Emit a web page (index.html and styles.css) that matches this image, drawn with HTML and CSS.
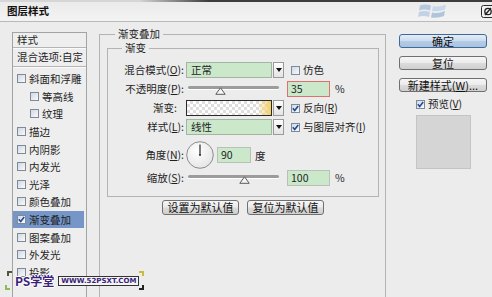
FILE: index.html
```html
<!DOCTYPE html>
<html lang="zh-CN">
<head>
<meta charset="utf-8">
<title>图层样式</title>
<link rel="stylesheet" href="styles.css">
</head>
<body>
<div class="win">
  <div class="titlebar">
    <span class="title">图层样式</span>
    <svg class="winlogo" viewBox="0 0 30 17" width="30" height="17">
      <path d="M2 3.5 Q7 1.5 13 3.5 L12 8.5 Q6.5 6.5 1 8.5 Z" fill="#b4c8de"/>
      <path d="M15 4 Q21 5.5 28 2.5 L27 7.5 Q21 10 14 9 Z" fill="#c9d8e9"/>
      <path d="M1 10 Q6 8 12 10 L11 15 Q5.5 13 0 15 Z" fill="#c2d3e6"/>
      <path d="M14 10.5 Q20 12 27 9 L26 14 Q20 16.5 13 15.5 Z" fill="#b0c4dc"/>
    </svg>
    <span class="close">
      <svg viewBox="0 0 16 13" width="16" height="13">
        <rect x="0.5" y="0.5" width="15" height="12" rx="2" fill="#f2f2f2" stroke="#2c2c2c"/>
        <circle cx="7" cy="6.5" r="3.2" fill="none" stroke="#222" stroke-width="1.3"/>
        <path d="M4 10 L10 3" stroke="#222" stroke-width="1.3"/>
      </svg>
    </span>
  </div>

  <div class="main">
    <div class="side">
      <div class="list">
        <div class="lh lh1">样式</div>
        <div class="lh lh2">混合选项:自定</div>
        <div class="items">
          <div class="it"><span class="cb"></span>斜面和浮雕</div>
          <div class="it sub"><span class="cb"></span>等高线</div>
          <div class="it sub"><span class="cb"></span>纹理</div>
          <div class="it"><span class="cb"></span>描边</div>
          <div class="it"><span class="cb"></span>内阴影</div>
          <div class="it"><span class="cb"></span>内发光</div>
          <div class="it"><span class="cb"></span>光泽</div>
          <div class="it"><span class="cb"></span>颜色叠加</div>
          <div class="it sel"><span class="cb on"><svg viewBox="0 0 9 9" width="9" height="9"><path d="M1.8 4.3 L3.7 6.5 L7.2 1.9" stroke="#1f4a9c" stroke-width="1.6" fill="none"/></svg></span>渐变叠加</div>
          <div class="it"><span class="cb"></span>图案叠加</div>
          <div class="it"><span class="cb"></span>外发光</div>
          <div class="it"><span class="cb"></span>投影</div>
        </div>
      </div>
    </div>

    <div class="center">
      <fieldset class="outer">
        <legend>渐变叠加</legend>
        <fieldset class="inner">
          <legend>渐变</legend>
          <div class="rows">
            <div class="row">
              <span class="lbl">混合模式(<u>O</u>):</span>
              <div class="dd"><span class="val">正常</span><span class="arrow"></span></div>
              <div class="third"><span class="chk"><span class="cb"></span><span class="ct">仿色</span></span></div>
            </div>
            <div class="row">
              <span class="lbl">不透明度(<u>P</u>):</span>
              <div class="slider"><span class="track"></span><svg class="thumb" style="left:35%" viewBox="0 0 11 8" width="11" height="8"><path d="M5.5 0.8 L10.2 7.3 L0.8 7.3 Z" fill="#f6f6f6" stroke="#5a5a5a"/></svg></div>
              <div class="third"><span class="num err">35</span><span class="pct">%</span></div>
            </div>
            <div class="row">
              <span class="lbl gl">渐变:</span>
              <div class="grad"><span class="gbox"></span><span class="arrow"></span></div>
              <div class="third"><span class="chk"><span class="cb on"><svg viewBox="0 0 9 9" width="9" height="9"><path d="M1.8 4.3 L3.7 6.5 L7.2 1.9" stroke="#1f4a9c" stroke-width="1.6" fill="none"/></svg></span><span class="ct">反向(<u>R</u>)</span></span></div>
            </div>
            <div class="row r4">
              <span class="lbl">样式(<u>L</u>):</span>
              <div class="dd"><span class="val">线性</span><span class="arrow"></span></div>
              <div class="third"><span class="chk"><span class="cb on"><svg viewBox="0 0 9 9" width="9" height="9"><path d="M1.8 4.3 L3.7 6.5 L7.2 1.9" stroke="#1f4a9c" stroke-width="1.6" fill="none"/></svg></span><span class="ct">与图层对齐(<u>I</u>)</span></span></div>
            </div>
            <div class="row dialrow">
              <span class="lbl">角度(<u>N</u>):</span>
              <div class="dialwrap">
                <svg class="dial" viewBox="0 0 28 28" width="28" height="28">
                  <defs><radialGradient id="dg" cx="40%" cy="35%" r="70%"><stop offset="0" stop-color="#ffffff"/><stop offset="1" stop-color="#e4e4e4"/></radialGradient></defs>
                  <circle cx="14" cy="14" r="13.3" fill="url(#dg)" stroke="#8c8c8c"/>
                  <path d="M14 14 L14 3.5" stroke="#2a2a2a" stroke-width="1.2"/>
                  <circle cx="14" cy="14" r="1" fill="#2a2a2a"/>
                </svg>
                <span class="num ang">90</span>
                <span class="deg">度</span>
              </div>
              <div class="third"></div>
            </div>
            <div class="row r6">
              <span class="lbl">缩放(<u>S</u>):</span>
              <div class="slider"><span class="track"></span><svg class="thumb" style="left:62%" viewBox="0 0 11 8" width="11" height="8"><path d="M5.5 0.8 L10.2 7.3 L0.8 7.3 Z" fill="#f6f6f6" stroke="#5a5a5a"/></svg></div>
              <div class="third"><span class="num">100</span><span class="pct">%</span></div>
            </div>
          </div>
        </fieldset>
        <div class="defbtns">
          <button class="btn">设置为默认值</button>
          <button class="btn">复位为默认值</button>
        </div>
      </fieldset>
    </div>

    <div class="right">
      <button class="btn def">确定</button>
      <button class="btn">复位</button>
      <button class="btn">新建样式(<u>W</u>)...</button>
      <span class="chk pv"><span class="cb on"><svg viewBox="0 0 9 9" width="9" height="9"><path d="M1.8 4.3 L3.7 6.5 L7.2 1.9" stroke="#1f4a9c" stroke-width="1.6" fill="none"/></svg></span><span class="ct">预览(<u>V</u>)</span></span>
      <div class="pvbox"></div>
    </div>
  </div>

  <div class="wm">
    <span class="c tl"></span><span class="c bl"></span><span class="c tr"></span><span class="c br"></span>
    <span class="ps">PS学堂</span>
    <span class="url">WWW.52PSXT.COM</span>
  </div>
</div>
</body>
</html>
```

FILE: styles.css
```css
* { box-sizing: border-box; }
html, body { margin: 0; padding: 0; }
body {
  background: #ececec;
  font-family: "Noto Sans CJK SC", "Noto Sans", sans-serif;
  font-size: 10.5px;
  color: #1e1e1e;
}
u { text-decoration: underline; text-underline-offset: 1px; }

.win {
  width: 492px;
  height: 297px;
  overflow: hidden;
  position: relative;
  background: #ececec;
}

/* title bar */
.titlebar {
  width: 497px;
  height: 22px;
  display: flex;
  align-items: center;
  padding-left: 7px;
  border-bottom: 1px solid #b9b9b9;
  background:
    linear-gradient(to right, #d6d6d6 0, #d6d6d6 28%, #3c3c3c 42%, #3c3c3c 100%) top / 100% 2px no-repeat,
    linear-gradient(#eaeaea, #f3f3f3);
}
.title { flex: 1; font-weight: bold; font-size: 10.5px; line-height: 12px; color: #111; }
.winlogo { flex-shrink: 0; align-self: flex-start; margin-top: 2px; }
.close { flex-shrink: 0; margin-left: 33px; width: 16px; height: 13px; align-self: flex-start; margin-top: 5px; display: block; }
.close svg { display: block; }

.main { display: flex; align-items: flex-start; }

/* left list */
.side { margin: 10px 0 0 12px; width: 75px; flex-shrink: 0; }
.list { border: 1px solid #a3a3a3; height: 300px; background: #eeeeee; }
.lh {
  padding-left: 4px;
  border-bottom: 1px solid #b4b4b4;
  box-shadow: 0 1px 0 #fbfbfb;
  white-space: nowrap;
}
.lh1 { height: 15px; line-height: 14px; }
.lh2 { height: 19px; line-height: 18px; }
.items { padding: 3px 2px 0 0; }
.it {
  height: 17.6px;
  display: flex;
  align-items: center;
  padding-left: 4px;
  white-space: nowrap;
}
.it .cb { margin-right: 3px; }
.it.sub { padding-left: 17px; }
.it.sel { background: #7796c8; }

/* checkbox */
.cb {
  width: 9px;
  height: 9px;
  flex-shrink: 0;
  border: 1px solid #7f8a99;
  background: linear-gradient(135deg, #d2d9e2, #f8f9fb);
  display: inline-block;
  position: relative;
}
.cb svg { position: absolute; left: -1px; top: -1px; }

/* center */
.center { margin: 5px 0 0 12px; width: 287px; flex-shrink: 0; }
fieldset { margin: 0; min-width: 0; border: 1px solid #b3b3b3; }
.outer { padding: 0 6px 0 7px; height: 300px; }
.outer > legend, .inner > legend { padding: 0 3px; line-height: 14px; }
.outer > legend { margin-left: 8px; }
.inner > legend { margin-left: 14px; }
.inner { padding: 0 0 10px 0; }

.rows { display: flex; flex-direction: column; padding-top: 7px; }
.row {
  display: grid;
  grid-template-columns: 76px 98px auto;
  column-gap: 2px;
  align-items: center;
  height: 16px;
  margin-bottom: 3px;
}
.row.r4 { margin-bottom: 0; }
.row.dialrow { height: 30px; margin-top: 5px; margin-bottom: 0; }
.row.r6 { margin-bottom: 0; }
.lbl { text-align: right; white-space: nowrap; line-height: 16px; }
.lbl.gl { padding-right: 7px; }

.third { display: flex; align-items: center; height: 16px; }
.chk { display: flex; align-items: center; margin-left: 5px; white-space: nowrap; }
.chk .ct { margin-left: 3px; line-height: 14px; }

.dd, .grad { display: flex; height: 16px; }
.dd .val {
  flex: 1;
  background: #cbe8cb;
  border: 1px solid #a5b3a5;
  padding-left: 4px;
  line-height: 14px;
}
.gbox {
  flex: 1;
  border: 1px solid #2a2a2a;
  background:
    linear-gradient(to right, rgba(246, 211, 106, 0) 84%, #f3cf66 100%),
    repeating-conic-gradient(#dedede 0 25%, #ffffff 0 50%) 0 0 / 6px 6px;
}
.arrow {
  width: 11px;
  margin-left: 1px;
  border: 1px solid #9a9a9a;
  background: linear-gradient(#fdfdfd, #e4e4e4);
  display: flex;
  align-items: center;
  justify-content: center;
}
.arrow::after {
  content: "";
  border-left: 3px solid transparent;
  border-right: 3px solid transparent;
  border-top: 4px solid #111;
}

.slider { position: relative; height: 16px; margin: 0 5px 0 2px; }
.track {
  position: absolute;
  left: 0; right: 0; top: 5px;
  height: 3px;
  border-radius: 2px;
  background: #9c9c9c;
  box-shadow: 0 1px 0 #ffffff;
}
.thumb { position: absolute; top: 6px; margin-left: -5px; }

.num {
  width: 43px;
  height: 16px;
  margin-left: 1px;
  background: #cbe8cb;
  border: 1px solid #b6c2b6;
  padding-left: 3px;
  line-height: 14px;
}
.num.err { border-color: #e07070; }
.pct { margin-left: 5px; line-height: 14px; }

.dialwrap { display: flex; align-items: center; height: 30px; }
.dial { flex-shrink: 0; display: block; }
.num.ang { width: 34px; margin-left: 3px; }
.deg { margin-left: 4px; }

/* buttons */
.btn {
  appearance: none;
  -webkit-appearance: none;
  height: 15px;
  padding: 0;
  border: 1px solid #707070;
  border-radius: 3px;
  background: linear-gradient(#f6f6f6 0%, #ebebeb 48%, #dcdcdc 52%, #cfcfcf 100%);
  font-family: inherit;
  font-size: 11px;
  line-height: 13px;
  color: #111;
  white-space: nowrap;
}
.defbtns { display: flex; justify-content: center; gap: 8px; margin-top: 3px; }
.defbtns .btn { width: 77px; }

.right {
  flex: 1;
  padding: 12px 0 0 13px;
  display: flex;
  flex-direction: column;
  align-items: flex-start;
}
.right .btn { width: 88px; height: 14px; margin-bottom: 8px; line-height: 12px; }
.btn.def {
  border-color: #3e6a9a;
  background: linear-gradient(#e4edf7, #cbdcee 48%, #b5cce6 52%, #a9c2df);
}
.pv { margin: -2px 0 0 17px; height: 12px; }
.pvbox {
  width: 55px;
  height: 54px;
  margin: 5px 0 0 17px;
  background: #d5d5d5;
  border: 1px solid #c4c4c4;
}

/* watermark */
.wm {
  position: absolute;
  left: 5px;
  top: 271px;
  width: 140px;
  height: 19px;
  display: flex;
  align-items: center;
}
.wm .c { position: absolute; width: 5px; height: 5px; }
.wm .tl { left: 2px; top: 0; border-top: 2px solid #55533a; border-left: 2px solid #55533a; }
.wm .bl { left: 0; bottom: 0; border-bottom: 2px solid #8dbb55; border-left: 2px solid #8dbb55; }
.wm .tr { right: 1px; top: 0; border-top: 2px solid #c9bc3a; border-right: 2px solid #c9bc3a; }
.wm .br { right: 1px; bottom: 0; border-bottom: 2px solid #222; border-right: 2px solid #222; }
.wm .ps {
  margin-left: 10px;
  font-weight: bold;
  font-size: 12px;
  line-height: 14px;
  color: #3b1f7a;
  text-shadow: 1px 0 0 #fff, -1px 0 0 #fff, 0 1px 0 #fff, 0 -1px 0 #fff;
}
.wm .url {
  margin-left: 4px;
  border: 1px solid #333;
  background: #f4f4f4;
  font-family: "DejaVu Sans", sans-serif;
  font-weight: bold;
  font-size: 7px;
  line-height: 8px;
  color: #3b1f7a;
  padding: 0 2px;
  white-space: nowrap;
}
```
